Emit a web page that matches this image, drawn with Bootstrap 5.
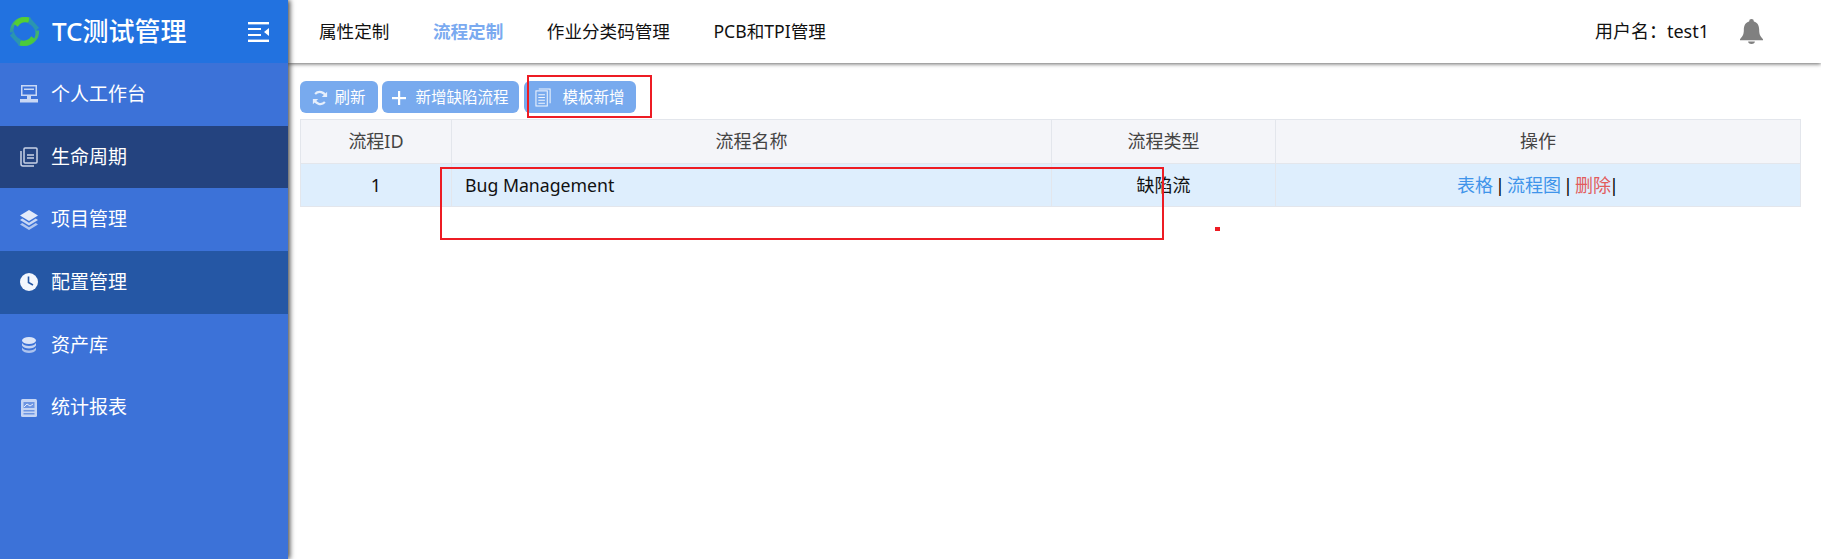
<!DOCTYPE html>
<html lang="zh">
<head>
<meta charset="utf-8">
<title>TC测试管理</title>
<link href="https://cdn.jsdelivr.net/npm/bootstrap@5.3.0/dist/css/bootstrap.min.css" rel="stylesheet">
<style>
html,body{height:559px;overflow:hidden;background:#fff;}
body{font-family:"Noto Sans","Noto Sans CJK SC",sans-serif;color:#111;position:relative;}
.shell{height:559px;}
.side{width:288px;flex:none;background:#3c72d8;box-shadow:2px 0 5px rgba(0,0,0,.7);z-index:3;}
.brand{height:63px;background:#2272e0;color:#fff;font-size:26px;font-weight:500;padding-left:9px;padding-right:19px;}
.brand-name{margin-left:12px;}
.menu-item{height:62.67px;color:#fff;font-size:19px;padding-left:20px;gap:13px;}
.menu-item svg{flex:none;}
.menu-dark{background:#24437f;}
.menu-mid{background:#2557a5;}
.topbar{height:63px;background:#fff;box-shadow:0 1px 4px rgba(0,0,0,.6);padding-left:31px;padding-right:58px;z-index:2;font-size:17.6px;}
.top-link{color:#111;text-decoration:none;margin-right:43.5px;}
.top-active{color:#7aaaf0;font-weight:700;}
.user-name{margin-right:31px;font-size:18px;}
.content{padding:18px 20px 0 12px;}
.tool-btn{background:#78aaee;border:0;color:#fff;font-size:15.5px;height:32px;padding:1px 0 0;border-radius:6px;display:inline-flex;align-items:center;justify-content:center;}
.btn-refresh{width:78px;gap:6px;margin-right:4px;}
.btn-add{width:137px;gap:9px;margin-right:5px;}
.btn-tpl{width:112px;gap:10px;}
.tool-row{margin-bottom:6px;}
.flow-table{table-layout:fixed;width:1500px;margin:0;border-color:#e3e6ec;font-size:18px;}
.flow-table th{background:#f4f5f9;font-weight:400;color:#444;height:44px;padding:0;text-align:center;vertical-align:middle;font-size:18px;}
.flow-table td{background:#deeefd;height:43px;padding:0;text-align:center;vertical-align:middle;color:#111;}
.flow-table td.name-cell{text-align:left;padding-left:13px;font-size:17.7px;}
.act-link{color:#3f94ea;text-decoration:none;}
.del-link{color:#e25c5c;text-decoration:none;}
.sep{margin:0 2px;color:#000;}
.sep-end{color:#000;margin-left:-2px;}
.mark-box{position:absolute;border:2px solid #ed1c24;z-index:5;}
.box-a{left:527px;top:75px;width:125px;height:43px;}
.box-b{left:440px;top:167px;width:724px;height:73px;}
.mark-dot{position:absolute;left:1215px;top:227px;width:5px;height:4px;background:#ed1c24;z-index:5;}
</style>
</head>
<body>
<div class="shell d-flex">
  <aside class="side d-flex flex-column">
    <div class="brand d-flex align-items-center">
      <svg width="31" height="31" viewBox="0 0 32 32" fill="none">
        <defs>
          <linearGradient id="lg" x1="0" y1="0" x2="0" y2="1"><stop offset="0" stop-color="#55cf33"/><stop offset="1" stop-color="#2a8fb4"/></linearGradient>
          <linearGradient id="lg2" x1="1" y1="1" x2="0" y2="0"><stop offset="0" stop-color="#55cf33"/><stop offset="1" stop-color="#2a8fb4"/></linearGradient>
        </defs>
        <path d="M1 17 A15 15 0 0 1 15 1 L17 5 L23 2 A15 15 0 0 0 6 9 A11 11 0 0 0 5 17 Z" fill="url(#lg)"/>
        <path d="M5 8 A14 14 0 0 1 22 2 L20 7 A10 10 0 0 0 9 11 Z" fill="#55cf33"/>
        <path d="M21 1 L31 12 L27 16 A12 12 0 0 0 20 8 Z" fill="#2a95b0"/>
        <path d="M31 15 A15 15 0 0 1 17 31 L15 27 L9 30 A15 15 0 0 0 26 23 A11 11 0 0 0 27 15 Z" fill="url(#lg2)"/>
        <path d="M27 24 A14 14 0 0 1 10 30 L12 25 A10 10 0 0 0 23 21 Z" fill="#4bca3a"/>
        <path d="M11 31 L1 20 L5 16 A12 12 0 0 0 12 24 Z" fill="#2a95b0"/>
      </svg>
      <span class="brand-name flex-grow-1">TC测试管理</span>
      <svg width="21" height="20" viewBox="0 0 21 20" fill="#fff">
        <rect x="0" y="0" width="21" height="2.4"/><rect x="0" y="6" width="13" height="2"/><rect x="0" y="12" width="13" height="2"/><rect x="0" y="17.6" width="21" height="2.4"/><path d="M21 6v8l-5-4z"/>
      </svg>
    </div>
    <div class="menu-item d-flex align-items-center">
      <svg width="18" height="18" viewBox="0 0 18 18" fill="#c9d8f5"><path d="M1 0h16v11H1zM2.500 1.500v8h13v-8z"/><rect x="4" y="3.500" width="10" height="1.500"/><rect x="7" y="11" width="4" height="3"/><rect x="0" y="14" width="18" height="3.500"/></svg>
      <span>个人工作台</span>
    </div>
    <div class="menu-item menu-dark d-flex align-items-center">
      <svg width="18" height="20" viewBox="0 0 18 20" fill="none" stroke="#c9d3e8" stroke-width="1.500"><rect x="4" y="1" width="13" height="15" rx="1"/><path d="M1 4v13a2 2 0 0 0 2 2h11"/><path d="M7 8h7M7 11h7"/></svg>
      <span>生命周期</span>
    </div>
    <div class="menu-item d-flex align-items-center">
      <svg width="18" height="20" viewBox="0 0 20 20" fill="#e3ebfa" preserveAspectRatio="none"><path d="M10 0l10 5.500-10 5.500L0 5.500z"/><path d="M2.500 8.500L10 12.700l7.500-4.200L20 10l-10 5.500L0 10z" opacity=".85"/><path d="M2.500 13L10 17.200 17.500 13 20 14.500 10 20 0 14.500z" opacity=".7"/></svg>
      <span>项目管理</span>
    </div>
    <div class="menu-item menu-mid d-flex align-items-center">
      <svg width="18" height="18" viewBox="0 0 18 18"><circle cx="9" cy="9" r="9" fill="#f3f6fd"/><path d="M8.500 3.500V9.500L13 12" fill="none" stroke="#2557a5" stroke-width="1.600"/></svg>
      <span>配置管理</span>
    </div>
    <div class="menu-item d-flex align-items-center">
      <svg width="18" height="18" viewBox="0 0 18 18" fill="#dbe5f8"><ellipse cx="9" cy="4.500" rx="7" ry="3.500"/><path d="M2 7c1 2 4 3 7 3s6-1 7-3v2.500c-1 2-4 3-7 3s-6-1-7-3z" opacity=".85"/><path d="M2 11.500c1 2 4 3 7 3s6-1 7-3V14c-1 2-4 3-7 3s-6-1-7-3z" opacity=".7"/></svg>
      <span>资产库</span>
    </div>
    <div class="menu-item d-flex align-items-center">
      <svg width="18" height="18" viewBox="0 0 18 18"><rect x="1" y="0" width="16" height="18" rx="1.500" fill="#c5d5f4"/><rect x="3.500" y="3" width="11" height="6" fill="#6d95e2"/><path d="M4 8l3-3 3 2 3-2" stroke="#e6edfb" fill="none"/><rect x="3.500" y="11" width="11" height="1.500" fill="#6d95e2"/><rect x="3.500" y="14" width="11" height="1.500" fill="#6d95e2"/></svg>
      <span>统计报表</span>
    </div>
  </aside>
  <div class="flex-grow-1 d-flex flex-column">
    <header class="topbar d-flex align-items-center">
      <a class="top-link" href="#">属性定制</a>
      <a class="top-link top-active" href="#">流程定制</a>
      <a class="top-link" href="#">作业分类码管理</a>
      <a class="top-link" href="#">PCB和TPI管理</a>
      <span class="ms-auto user-name">用户名：test1</span>
      <svg width="23" height="25" viewBox="0 0 24 26" fill="#808080"><path d="M12 0a2.500 2.500 0 0 1 2.500 2.500C18.500 3.800 20 7 20 11c0 5 1 7 4 10v1H0v-1c3-3 4-5 4-10 0-4 1.500-7.200 5.500-8.500A2.500 2.500 0 0 1 12 0z"/><path d="M8.500 23.500h7a3.500 2.500 0 0 1-7 0z"/></svg>
    </header>
    <main class="content">
      <div class="d-flex tool-row">
        <button class="tool-btn btn-refresh" type="button">
          <svg width="16" height="16" viewBox="0 0 18 18" fill="none" stroke="#e6effc" stroke-width="2.400"><path d="M15.500 7.500A7 7 0 0 0 3.500 4.500"/><path d="M2.500 10.500A7 7 0 0 0 14.500 13.500"/><path d="M17 2v6h-6z" stroke="none" fill="#e6effc"/><path d="M1 16v-6h6z" stroke="none" fill="#e6effc"/></svg>
          <span>刷新</span>
        </button>
        <button class="tool-btn btn-add" type="button">
          <svg width="14" height="14" viewBox="0 0 14 14" fill="#fff"><rect x="6" y="0" width="2.200" height="14"/><rect x="0" y="6" width="14" height="2.200"/></svg>
          <span>新增缺陷流程</span>
        </button>
        <button class="tool-btn btn-tpl" type="button">
          <svg width="17" height="19" viewBox="0 0 18 20" fill="none" stroke="#f0f5fd" stroke-width="1.100"><rect x="1" y="3" width="12" height="16"/><path d="M4 1h12v15"/><path d="M3.500 7h7M3.500 10h7M3.500 13h7M3.500 16h7"/></svg>
          <span>模板新增</span>
        </button>
      </div>
      <table class="table table-bordered flow-table">
        <colgroup><col style="width:151px"><col style="width:600px"><col style="width:224px"><col style="width:525px"></colgroup>
        <thead><tr><th>流程ID</th><th>流程名称</th><th>流程类型</th><th>操作</th></tr></thead>
        <tbody><tr>
          <td>1</td>
          <td class="name-cell">Bug Management</td>
          <td>缺陷流</td>
          <td><a class="act-link" href="#">表格</a><span class="sep">|</span><a class="act-link" href="#">流程图</a><span class="sep">|</span><a class="del-link" href="#">删除</a><span class="sep-end">|</span></td>
        </tr></tbody>
      </table>
    </main>
  </div>
</div>
<div class="mark-box box-a"></div>
<div class="mark-box box-b"></div>
<div class="mark-dot"></div>
<script src="https://cdn.jsdelivr.net/npm/bootstrap@5.3.0/dist/js/bootstrap.bundle.min.js"></script>
</body>
</html>
